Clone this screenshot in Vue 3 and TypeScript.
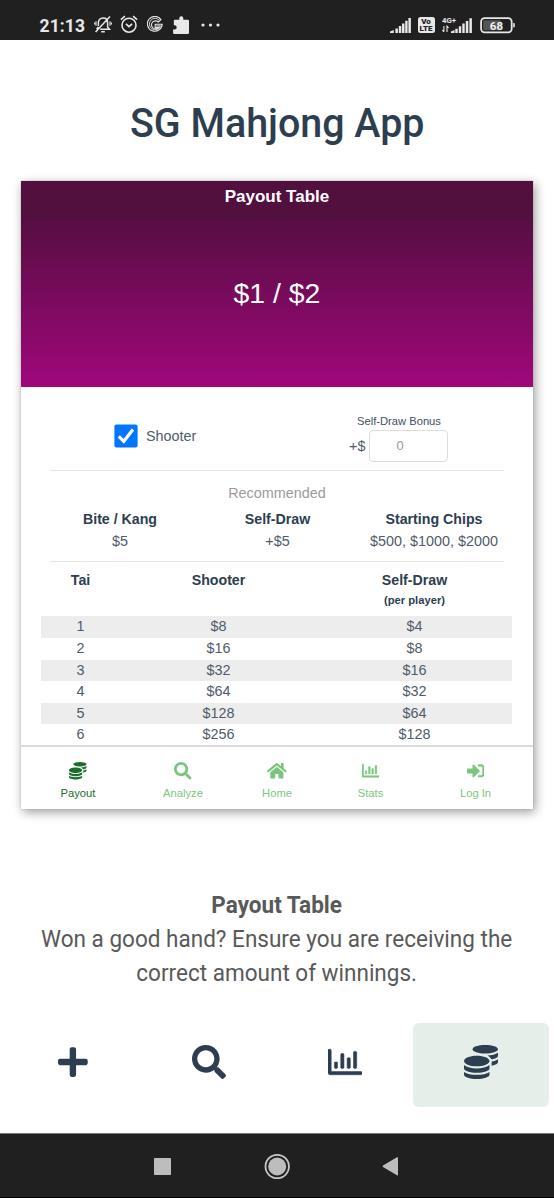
<script setup lang="ts">
interface Glyph { viewBox: string; d: string }
interface PayoutRow { tai: number; shooter: string; selfDraw: string }

const icons: Record<string, Glyph> = {
  coins: { viewBox: '0 0 512 512', d: 'M0 405.3V448c0 35.3 86 64 192 64s192-28.7 192-64v-42.7C342.7 434.4 267.2 448 192 448S41.3 434.4 0 405.3zM320 128c106 0 192-28.7 192-64S426 0 320 0 128 28.7 128 64s86 64 192 64zM0 300.4V352c0 35.3 86 64 192 64s192-28.7 192-64v-51.6c-41.3 34-116.9 51.6-192 51.6S41.3 334.4 0 300.4zm416 11c57.3-11.1 96-31.7 96-55.4v-42.7c-23.2 16.4-57.3 27.6-96 34.5v63.6zM192 160C86 160 0 195.8 0 240s86 80 192 80 192-35.8 192-80-86-80-192-80zm219.3 56.3c60-10.8 100.7-32 100.7-56.3v-42.7c-35.5 25.1-96.5 38.6-160.7 41.8 29.5 14.3 51.2 33.5 60 57.2z' },
  search: { viewBox: '0 0 512 512', d: 'M505 442.7L405.3 343c-4.5-4.5-10.6-7-17-7H372c27.6-35.3 44-79.7 44-128C416 93.1 322.9 0 208 0S0 93.1 0 208s93.1 208 208 208c48.3 0 92.7-16.4 128-44v16.3c0 6.4 2.5 12.5 7 17l99.7 99.7c9.4 9.4 24.6 9.4 33.9 0l28.3-28.3c9.4-9.4 9.4-24.6.1-34zM208 336c-70.7 0-128-57.2-128-128 0-70.7 57.2-128 128-128 70.7 0 128 57.2 128 128 0 70.7-57.2 128-128 128z' },
  home: { viewBox: '0 0 576 512', d: 'M280.37 148.26L96 300.11V464a16 16 0 0 0 16 16l112.06-.29a16 16 0 0 0 15.92-16V368a16 16 0 0 1 16-16h64a16 16 0 0 1 16 16v95.64a16 16 0 0 0 16 16.05L464 480a16 16 0 0 0 16-16V300L295.67 148.26a12.19 12.19 0 0 0-15.3 0zM571.6 251.47L488 182.56V44.05a12 12 0 0 0-12-12h-56a12 12 0 0 0-12 12v72.61L318.47 43a48 48 0 0 0-61 0L4.34 251.47a12 12 0 0 0-1.6 16.9l25.5 31A12 12 0 0 0 45.15 301l235.22-193.74a12.19 12.19 0 0 1 15.3 0L530.9 301a12 12 0 0 0 16.9-1.6l25.5-31a12 12 0 0 0-1.7-16.93z' },
  stats: { viewBox: '0 0 512 512', d: 'M396.8 352h22.4c6.4 0 12.8-6.4 12.8-12.8V108.8c0-6.4-6.4-12.8-12.8-12.8h-22.4c-6.4 0-12.8 6.4-12.8 12.8v230.4c0 6.4 6.4 12.8 12.8 12.8zm-192 0h22.4c6.4 0 12.8-6.4 12.8-12.8V140.8c0-6.4-6.4-12.8-12.8-12.8h-22.4c-6.4 0-12.8 6.4-12.8 12.8v198.4c0 6.4 6.4 12.8 12.8 12.8zm96 0h22.4c6.4 0 12.8-6.4 12.8-12.8V204.8c0-6.4-6.4-12.8-12.8-12.8h-22.4c-6.4 0-12.8 6.4-12.8 12.8v134.4c0 6.4 6.4 12.8 12.8 12.8zM496 400H48V80c0-8.84-7.16-16-16-16H16C7.16 64 0 71.16 0 80v336c0 17.67 14.33 32 32 32h464c8.84 0 16-7.16 16-16v-16c0-8.84-7.16-16-16-16zm-387.2-48h22.4c6.4 0 12.8-6.4 12.8-12.8v-70.4c0-6.4-6.4-12.8-12.8-12.8h-22.4c-6.4 0-12.8 6.4-12.8 12.8v70.4c0 6.4 6.4 12.8 12.8 12.8z' },
  login: { viewBox: '0 0 512 512', d: 'M416 448h-84c-6.6 0-12-5.4-12-12v-40c0-6.6 5.4-12 12-12h84c17.7 0 32-14.3 32-32V160c0-17.7-14.3-32-32-32h-84c-6.6 0-12-5.4-12-12V76c0-6.6 5.4-12 12-12h84c53 0 96 43 96 96v192c0 53-43 96-96 96zm-47-201L201 79c-15-15-41-4.5-41 17v96H24c-13.3 0-24 10.7-24 24v96c0 13.3 10.7 24 24 24h136v96c0 21.5 26 32 41 17l168-168c9.3-9.4 9.3-24.6 0-34z' },
  plus: { viewBox: '0 0 448 512', d: 'M416 208H272V64c0-17.67-14.33-32-32-32h-32c-17.67 0-32 14.33-32 32v144H32c-17.67 0-32 14.33-32 32v32c0 17.67 14.33 32 32 32h144v144c0 17.67 14.33 32 32 32h32c17.67 0 32-14.33 32-32V304h144c17.67 0 32-14.33 32-32v-32c0-17.67-14.33-32-32-32z' },
}

const rows: PayoutRow[] = [
  { tai: 1, shooter: '$8', selfDraw: '$4' },
  { tai: 2, shooter: '$16', selfDraw: '$8' },
  { tai: 3, shooter: '$32', selfDraw: '$16' },
  { tai: 4, shooter: '$64', selfDraw: '$32' },
  { tai: 5, shooter: '$128', selfDraw: '$64' },
  { tai: 6, shooter: '$256', selfDraw: '$128' },
]

const recommended = [
  { label: 'Bite / Kang', value: '$5' },
  { label: 'Self-Draw', value: '+$5' },
  { label: 'Starting Chips', value: '$500, $1000, $2000' },
]

const menu = [
  { label: 'Payout', icon: 'coins', active: true },
  { label: 'Analyze', icon: 'search', active: false },
  { label: 'Home', icon: 'home', active: false },
  { label: 'Stats', icon: 'stats', active: false },
  { label: 'Log In', icon: 'login', active: false },
]

const tabs = [
  { icon: 'plus', active: false },
  { icon: 'search', active: false },
  { icon: 'stats', active: false },
  { icon: 'coins', active: true },
]
</script>

<template>
  <div class="screen">
    <header class="status">
      <div class="status-left">
        <span class="clock">21:13</span>
        <svg class="bell" width="18" height="18" viewBox="0 0 18 18" fill="none" stroke="#e8e8e8" stroke-width="1.5">
          <path d="M4.4 11V7.600C4.400 4.900 6.300 3 9 3s4.600 1.900 4.600 4.600V12l1.900 2.300H6.200M2.600 14.300L4.400 12M7.200 16.800h3.600M16 1.600L1.600 17" />
          <path d="M2 6.200v4.600M.6 7.400v2.200M16 6.200v4.600M17.400 7.400v2.200" stroke-width="1.100" />
        </svg>
        <svg class="alarm" width="18" height="18" viewBox="0 0 18 18" fill="none" stroke="#e8e8e8" stroke-width="1.600">
          <circle cx="9" cy="10.200" r="7" /><path d="M5.900 8.800L9 11.700l3.100-2.900M.9 4.600L4.900 1.200M17.100 4.600L13.100 1.200" />
        </svg>
        <svg class="google" width="16" height="18" viewBox="0 0 16 18" fill="none" stroke="#e8e8e8">
          <path d="M13.900 3.600A7.400 7.400 0 1 0 15.200 8.200H8.200v3.200h3.400A4 4 0 1 1 11.300 6z" stroke-width="1.100" />
          <path d="M12.700 4.700A5.700 5.700 0 1 0 13.500 9.800H9.500" stroke-width=".9" />
        </svg>
        <svg class="puzzle" width="17" height="20" viewBox="0 0 17 20" fill="#e8e8e8">
          <path d="M2 4.800h4.300V3.200a2 2 0 0 1 4 0v1.600h4.500q1.200 0 1.200 1.200v11.700q0 1.200-1.200 1.200H1.300Q.1 18.900.1 17.700V14.500h1.500a2 2 0 0 0 0-4.200H.8V6q0-1.200 1.200-1.200z" />
        </svg>
        <svg class="dots" width="19" height="4" viewBox="0 0 19 4" fill="#e8e8e8">
          <circle cx="2" cy="2" r="1.600" /><circle cx="9.500" cy="2" r="1.600" /><circle cx="17" cy="2" r="1.600" />
        </svg>
      </div>
      <div class="status-right">
        <svg class="signal" width="21" height="15" viewBox="0 0 21 15" fill="#e8e8e8">
          <path d="M0 15v-1.500L3.800 12v3zM5.400 10.500h2.500V15H5.400zM8.800 8h2.500v7H8.800zM12 5.500h2.500v9.500H12zM15.200 2.800h2.400V15h-2.400zM18.400 0h2.500v15h-2.500z" />
        </svg>
        <div class="volte"><span>Vo</span><span>LTE</span></div>
        <svg class="mobile" width="31" height="18" viewBox="0 0 31 18" fill="#e8e8e8">
          <text x="0" y="7" class="net">4G+</text>
          <path d="M1.900 10v5.800M.4 14.200l1.500 1.600M5 16v-5.800l1.600 1.600" fill="none" stroke="#e8e8e8" stroke-width="1.100" />
          <path d="M9 17v-1.500l3.500-1.500v3zM13.300 12.800h2.400V17h-2.400zM16.800 10.200h2.400V17h-2.400zM20.300 7.600h2.400V17h-2.400zM23.800 5h2.500v12h-2.500zM27.400 2.200h2.500V17h-2.500z" />
        </svg>
        <svg class="battery" width="36" height="17" viewBox="0 0 36 17">
          <rect x="1.100" y="1.100" width="30.600" height="14.300" rx="3.600" fill="none" stroke="#e8e8e8" stroke-width="1.800" />
          <rect x="3.200" y="3.200" width="18" height="10.100" rx="1.500" fill="#555" />
          <rect x="33.200" y="6" width="1.600" height="4.500" rx=".7" fill="#e8e8e8" />
          <text x="16.400" y="12.500" text-anchor="middle" class="percent">68</text>
        </svg>
      </div>
    </header>

    <main class="page">
      <h1>SG Mahjong App</h1>

      <section class="card">
        <div class="hero">
          <div class="hero-title">Payout Table</div>
          <div class="stakes">$1 / $2</div>
        </div>

        <div class="options">
          <label class="shooter">
            <svg width="24" height="24" viewBox="0 0 24 24">
              <rect x=".4" y=".4" width="23.200" height="23.200" rx="2" fill="#0075ff" />
              <path d="M4.800 12.300l5 5L19 5.600" fill="none" stroke="#fff" stroke-width="3.200" />
            </svg>
            <span>Shooter</span>
          </label>
          <div class="bonus">
            <div class="bonus-label">Self-Draw Bonus</div>
            <div class="bonus-field"><span>+$</span><span class="input">0</span></div>
          </div>
        </div>

        <div class="recommended">
          <div class="rec-title">Recommended</div>
          <div class="rec-grid">
            <div v-for="item in recommended" :key="item.label">
              <strong>{{ item.label }}</strong>
              <span>{{ item.value }}</span>
            </div>
          </div>
        </div>

        <div class="table">
          <div class="row head">
            <span>Tai</span><span>Shooter</span><span>Self-Draw<small>(per player)</small></span>
          </div>
          <div v-for="row in rows" :key="row.tai" class="row body">
            <span>{{ row.tai }}</span><span>{{ row.shooter }}</span><span>{{ row.selfDraw }}</span>
          </div>
        </div>

        <nav class="menu">
          <div v-for="item in menu" :key="item.label" class="menu-item" :class="[item.icon, { active: item.active }]">
            <svg :viewBox="icons[item.icon].viewBox"><path :d="icons[item.icon].d" /></svg>
            <span>{{ item.label }}</span>
          </div>
        </nav>
      </section>

      <section class="caption">
        <h2>Payout Table</h2>
        <p>Won a good hand? Ensure you are receiving the</p>
        <p>correct amount of winnings.</p>
      </section>

      <nav class="tabs">
        <div v-for="tab in tabs" :key="tab.icon" class="tab" :class="[tab.icon, { active: tab.active }]">
          <svg :viewBox="icons[tab.icon].viewBox"><path :d="icons[tab.icon].d" /></svg>
        </div>
      </nav>
    </main>

    <footer class="system">
      <svg width="246" height="28" viewBox="0 0 246 28" fill="#bdbdbd">
        <rect x="0" y="6" width="17" height="17" rx=".8" />
        <circle cx="123.200" cy="14.500" r="11.700" fill="none" stroke="#c9c9c9" stroke-width="1.800" />
        <circle cx="123.200" cy="14.500" r="9" />
        <path d="M244 5.800v17q0 1-1 .5l-14-8.200q-1-.8 0-1.600l14-8.200q1-.5 1 .5z" />
      </svg>
    </footer>
  </div>
</template>

<style>
body { margin: 0; background: #fff; }
</style>

<style scoped>
.screen { width: 554px; height: 1200px; display: flex; flex-direction: column; overflow: hidden; background: #fff; font-family: Roboto, sans-serif; }
.status { height: 40px; flex: none; box-sizing: border-box; display: flex; justify-content: space-between; background: #202020; color: #e8e8e8; padding: 0 38.500px 0 39.500px; }
.status-left, .status-right { display: flex; align-items: flex-start; }
.clock { font-size: 17.500px; font-weight: 700; line-height: 20px; width: 46.500px; margin-top: 15.500px; letter-spacing: .1px; white-space: nowrap; }
.bell { margin: 15px 0 0 8px; }
.alarm { margin: 15px 0 0 8px; }
.google { margin: 16px 0 0 9px; }
.puzzle { margin: 15px 0 0 9.500px; }
.dots { margin: 22.500px 0 0 11px; }
.signal { margin-top: 17.500px; }
.volte { width: 17px; height: 16px; margin: 17px 0 0 7px; border-radius: 2.500px; background: #e8e8e8; color: #202020; font-size: 8px; font-weight: 900; line-height: 7px; text-align: center; display: flex; flex-direction: column; padding-top: 1px; box-sizing: border-box; }
.mobile { margin: 15.500px 0 0 7px; }
.net { font: 700 7.800px Roboto, sans-serif; }
.battery { margin: 16.500px 0 0 7px; }
.percent { font: 700 11.500px Roboto, sans-serif; fill: #f2f2f2; }

.page { height: 1093px; flex: none; display: flex; flex-direction: column; align-items: center; }
h1 { margin: 0; height: 141px; line-height: 167px; font-size: 41px; font-weight: 500; color: #2c3e50; white-space: nowrap; transform: scaleX(.961); }
.card { width: 512px; height: 628px; flex: none; background: #fff; box-shadow: 0 0 1px #999, 2px 3px 10px rgba(0, 0, 0, .4); font-family: "Liberation Sans", Arial, sans-serif; font-size: 14.400px; color: #4f5b6a; }
.hero { height: 206px; background: linear-gradient(#540f41, #560e42 18%, #a0077b); color: #fff; text-align: center; }
.hero-title { height: 38px; line-height: 32px; background: #52103f; font-size: 17px; font-weight: 700; }
.stakes { font-size: 28.400px; line-height: 148px; }
.options { height: 83px; margin: 0 29px; border-bottom: 1px solid #e4e4e4; display: flex; }
.shooter { width: 298px; display: flex; align-items: center; gap: 8.500px; padding: 15px 0 0 63.500px; box-sizing: border-box; }
.bonus { padding-top: 26px; width: 104px; }
.bonus-label { font-size: 11.200px; line-height: 16px; margin-left: 9px; white-space: nowrap; color: #435061; }
.bonus-field { display: flex; align-items: center; gap: 4px; margin: 1px 0 0 1px; }
.input { width: 77px; height: 29.500px; border: 1px solid #dcdcdc; border-radius: 4px; flex: none; font-size: 12.800px; line-height: 29px; box-sizing: content-box; text-indent: 26px; color: #999; }
.recommended { height: 90px; margin: 0 29px; border-bottom: 1px solid #e4e4e4; }
.rec-title { text-align: center; line-height: 21px; padding-top: 12px; color: #9b9b9b; }
.rec-grid { display: grid; grid-template-columns: 158px 157px 156px; margin: 4px -9px 0; text-align: center; line-height: 22px; }
.rec-grid strong, .rec-grid span { display: block; }
.rec-grid strong, .head { color: #2c3e50; font-weight: 700; font-size: 14.200px; }
.table { padding: 0 21px 0 20px; height: 183px; }
.row { display: grid; grid-template-columns: 79px 197px 195px; text-align: center; }
.head { height: 54.400px; line-height: 22px; box-sizing: border-box; padding-top: 7px; }
.head small { display: block; font-size: 11.200px; line-height: 19px; }
.body { height: 21.600px; line-height: 21.600px; }
.body:nth-child(even) { background: #ededed; }
.menu { height: 64px; box-sizing: border-box; border-top: 2px solid #dcdcdc; display: grid; grid-template-columns: 114px 96px 92px 95px 115px; }
.menu-item { display: flex; flex-direction: column; align-items: center; color: #7bc67e; font-size: 11.200px; line-height: 14px; padding-top: 15px; }
.menu-item svg { height: 17.500px; fill: currentColor; margin-bottom: 6px; }
.menu-item.stats svg { stroke: currentColor; stroke-width: 14; }
.menu-item.active { color: #1b6e2d; }
.caption { margin-top: 79px; height: 102px; text-align: center; font-size: 23.400px; line-height: 34px; color: #595959; transform: scaleX(.963); }
.caption h2 { margin: 0; font-size: 23.400px; font-weight: 700; }
.caption p { margin: 0; white-space: nowrap; }
.tabs { margin-top: 33px; width: 544px; height: 84px; display: grid; grid-template-columns: repeat(4, 136px); }
.tabs { align-self: flex-start; margin-left: 5px; }
.tab { display: flex; align-items: center; justify-content: center; padding-bottom: 6px; box-sizing: border-box; border-radius: 6px; }
.tab svg { height: 34px; fill: #2c3e50; }
.tab.stats svg { stroke: #2c3e50; stroke-width: 8; }
.tab.active { background: #e6eee9; }
.system { height: 65px; flex: none; box-sizing: border-box; border-top: 1px solid #777; border-bottom: 1px solid #000; background: #202020; display: flex; justify-content: center; padding-top: 18px; }
</style>
